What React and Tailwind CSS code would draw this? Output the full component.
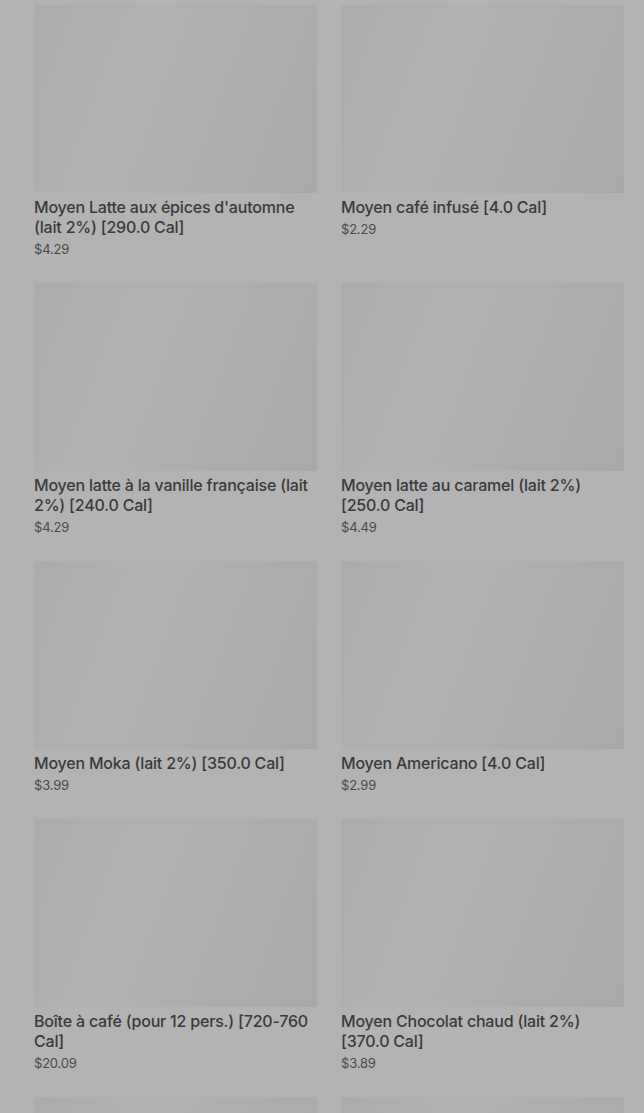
import React from "react";

const items = [
  { name: "Moyen Latte aux épices d'automne (lait 2%) [290.0 Cal]", price: "$4.29" },
  { name: "Moyen café infusé [4.0 Cal]", price: "$2.29" },
  { name: "Moyen latte à la vanille française (lait 2%) [240.0 Cal]", price: "$4.29" },
  { name: "Moyen latte au caramel (lait 2%) [250.0 Cal]", price: "$4.49" },
  { name: "Moyen Moka (lait 2%) [350.0 Cal]", price: "$3.99" },
  { name: "Moyen Americano [4.0 Cal]", price: "$2.99" },
  { name: "Boîte à café (pour 12 pers.) [720-760 Cal]", price: "$20.09" },
  { name: "Moyen Chocolat chaud (lait 2%) [370.0 Cal]", price: "$3.89" },
  { name: "", price: "" },
  { name: "", price: "" },
];

const ProductCard = ({ data }) => {
  return (
    <div className="flex flex-col">
      {/* skeleton image */}
      <div className="h-[188px] w-full bg-[linear-gradient(110deg,#acacac_0%,#b1b1b1_35%,#aeaeae_60%,#a9a9a9_100%)]" />
      <div className="mt-1 text-[16px] leading-5 font-medium tracking-[-0.2px] text-[#3a3a3a]">{data.name}</div>
      <div className="mt-[2px] text-[13px] leading-5 tracking-[-0.2px] text-[#4a4a4a]">{data.price}</div>
    </div>
  );
};

export default function App() {
  return (
    <div
      className="bg-[#b3b3b3] pt-[5px] pl-[34px] pr-[20px] overflow-hidden h-[1113px]"
      style={{ fontFamily: "Inter, 'Noto Sans', sans-serif" }}
    >
      <div className="grid grid-cols-2 gap-x-6 gap-y-6">
        {items.map((item, i) => (
          <ProductCard key={i} data={item} />
        ))}
      </div>
    </div>
  );
}
